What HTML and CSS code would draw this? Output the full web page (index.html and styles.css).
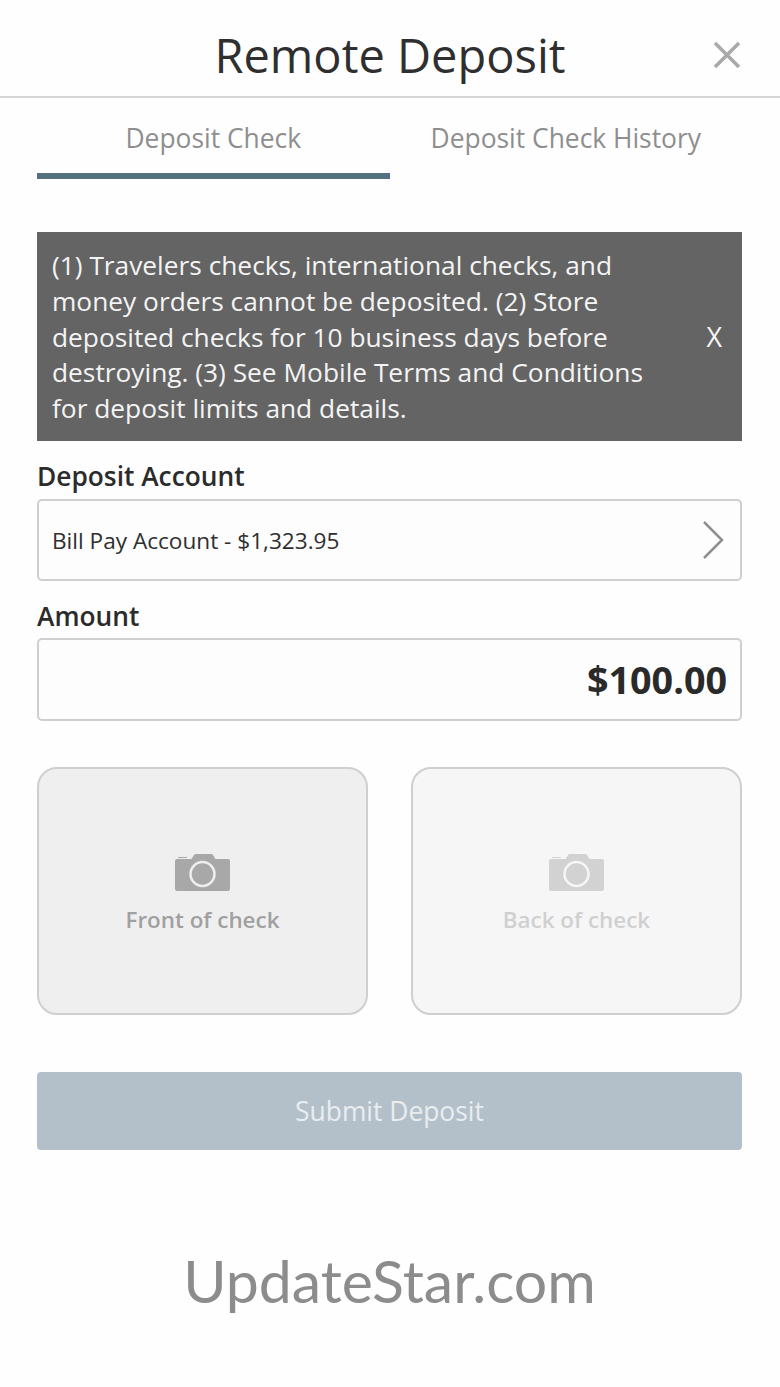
FILE: index.html
```html
<!DOCTYPE html>
<html lang="en">
<head>
<meta charset="utf-8">
<title>Remote Deposit</title>
<link rel="stylesheet" href="styles.css">
</head>
<body>
<header class="header">
  <h1 class="title">Remote Deposit</h1>
  <svg class="close" viewBox="0 0 28 28" aria-hidden="true"><path d="M2 2 L26 26 M26 2 L2 26"/></svg>
</header>
<main class="content">
  <nav class="tabs">
    <div class="tab tab-active">Deposit Check</div>
    <div class="tab">Deposit Check History</div>
  </nav>
  <section class="notice">
    <p class="notice-text">(1) Travelers checks, international checks, and money orders cannot be deposited. (2) Store deposited checks for 10 business days before destroying. (3) See Mobile Terms and Conditions for deposit limits and details.</p>
    <span class="notice-x">X</span>
  </section>
  <label class="label label-account">Deposit Account</label>
  <div class="field field-select">
    <span class="select-value">Bill Pay Account - $1,323.95</span>
    <svg class="chevron" viewBox="0 0 22 40" aria-hidden="true"><path d="M2 2 L20 20 L2 38"/></svg>
  </div>
  <label class="label label-amount">Amount</label>
  <div class="field field-amount">$100.00</div>
  <div class="captures">
    <div class="capture capture-front">
      <svg class="camera" viewBox="0 0 55 37" aria-hidden="true">
        <path class="cam-body" d="M2 5 H16.500 L19 1 Q19.500 0 21 0 H36 Q37.500 0 38 1 L40.500 5 H53 Q55 5 55 7 V35 Q55 37 53 37 H2 Q0 37 0 35 V7 Q0 5 2 5 Z"/>
        <path class="cam-flash" d="M3 3.500 H12"/>
        <circle class="cam-lens" cx="27.500" cy="20" r="12"/>
      </svg>
      <span class="capture-text">Front of check</span>
    </div>
    <div class="capture capture-back">
      <svg class="camera" viewBox="0 0 55 37" aria-hidden="true">
        <path class="cam-body" d="M2 5 H16.500 L19 1 Q19.500 0 21 0 H36 Q37.500 0 38 1 L40.500 5 H53 Q55 5 55 7 V35 Q55 37 53 37 H2 Q0 37 0 35 V7 Q0 5 2 5 Z"/>
        <path class="cam-flash" d="M3 3.500 H12"/>
        <circle class="cam-lens" cx="27.500" cy="20" r="12"/>
      </svg>
      <span class="capture-text">Back of check</span>
    </div>
  </div>
  <button class="submit" type="button">Submit Deposit</button>
  <div class="watermark">UpdateStar.com</div>
</main>
</body>
</html>
```
FILE: styles.css
```css
* { box-sizing: border-box; }
html, body { margin: 0; padding: 0; }
body {
  width: 780px;
  height: 1387px;
  overflow: hidden;
  background: #fefefe;
  font-family: "Open Sans", "Liberation Sans", sans-serif;
  color: #2f2f2f;
}
.header {
  height: 98px;
  border-bottom: 2px solid #d4d4d4;
  display: flex;
  align-items: center;
  justify-content: center;
  position: relative;
}
.title {
  margin: 13px 0 0;
  font-size: 47px;
  font-weight: 400;
  line-height: 60px;
  color: #2f2f2f;
}
.close {
  position: absolute;
  left: 713px;
  top: 41px;
  width: 28px;
  height: 28px;
}
.close path { fill: none; stroke: #a9a9a9; stroke-width: 3.500; }
.content { padding: 0 38px 0 37px; }
.tabs { display: flex; height: 81px; }
.tab {
  width: 353px;
  height: 81px;
  padding-top: 21px;
  text-align: center;
  font-size: 26.400px;
  line-height: 38px;
  color: #8e8e8e;
}
.tab-active { border-bottom: 6px solid #54717f; }
.notice {
  margin-top: 53px;
  height: 209px;
  background: #646464;
  display: flex;
  align-items: center;
  padding: 0 20px 0 15px;
  color: #f4f4f4;
}
.notice-text {
  margin: 2px 0 0;
  width: 600px;
  font-size: 26.300px;
  line-height: 35.800px;
}
.notice-x { margin-left: auto; font-size: 27px; line-height: 36px; }
.label {
  display: block;
  font-size: 26.300px;
  font-weight: 600;
  line-height: 36px;
  color: #2b2b2b;
}
.label-account { margin-top: 17px; }
.label-amount { margin-top: 17px; }
.field {
  margin-top: 4px;
  border: 2px solid #cfcfcf;
  border-radius: 5px;
  background: #fdfdfd;
  display: flex;
  align-items: center;
  padding: 0 13px;
}
.field-select { height: 82px; margin-top: 5px; }
.select-value { font-size: 22.600px; color: #2f2f2f; }
.chevron { margin-left: auto; margin-right: 3px; width: 22px; height: 40px; }
.chevron path { fill: none; stroke: #8f8f8f; stroke-width: 2.500; }
.field-amount {
  height: 83px;
  justify-content: flex-end;
  font-size: 37.700px;
  font-weight: 700;
  color: #2a2a2a;
}
.captures {
  display: flex;
  justify-content: space-between;
  margin-top: 46px;
}
.capture {
  width: 331px;
  height: 248px;
  border: 2px solid #cfcfcf;
  border-radius: 20px;
  display: flex;
  flex-direction: column;
  align-items: center;
  padding-top: 85px;
}
.capture-front { background: #f0eff0; }
.capture-back { background: #f6f6f6; }
.camera { width: 55px; height: 37px; }
.cam-lens { fill: none; stroke-width: 2.500; }
.cam-flash { fill: none; stroke-width: 1; }
.capture-text { margin-top: 13px; font-size: 22.400px; line-height: 32px; font-weight: 600; }
.capture-front .cam-body { fill: #a8a8a8; }
.capture-front .cam-flash { stroke: #a8a8a8; }
.capture-front .capture-text { color: #a0a0a0; }
.capture-back .cam-body { fill: #d2d2d2; }
.capture-back .cam-flash { stroke: #d2d2d2; }
.capture-back .capture-text { color: #d0d0d0; }
.capture-front .cam-lens { stroke: #f0eff0; }
.capture-back .cam-lens { stroke: #f6f6f6; }
.submit {
  display: block;
  width: 100%;
  height: 78px;
  margin-top: 57px;
  border: 0;
  border-radius: 4px;
  background: #b3c0ca;
  color: #e9edf0;
  font-family: inherit;
  font-size: 26.400px;
}
.watermark {
  margin-top: 89px;
  text-align: center;
  font-family: "Lato", "Open Sans", sans-serif;
  font-size: 59px;
  line-height: 84px;
  color: #8c8c8c;
}
```
